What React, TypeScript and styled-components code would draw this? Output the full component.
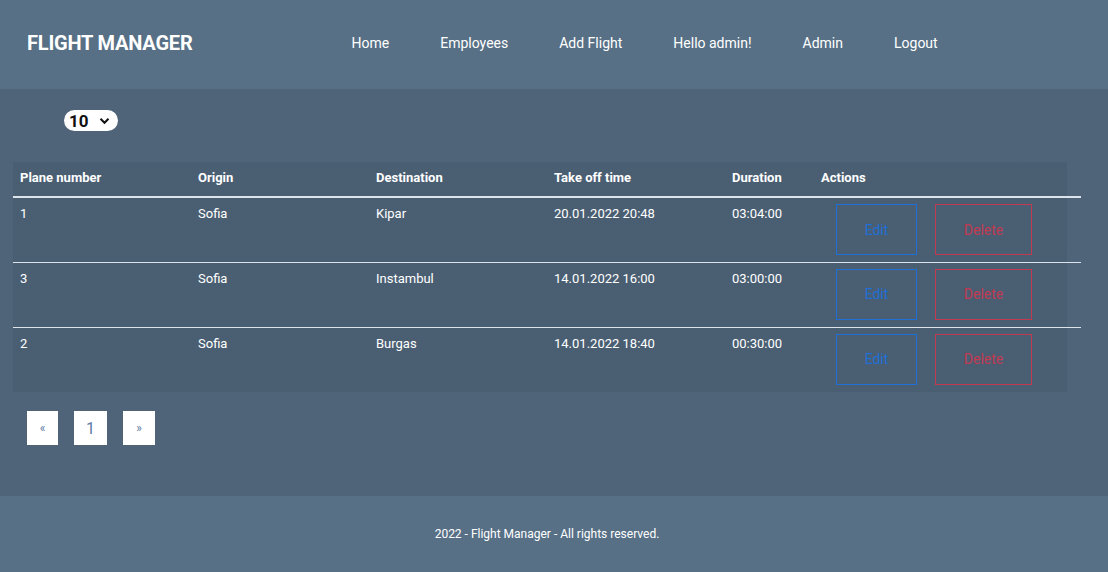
import styled, { createGlobalStyle } from 'styled-components';

const GlobalStyle = createGlobalStyle`
  html, body {
    margin: 0;
    padding: 0;
    background: #4f6478;
    font-family: Roboto, "Liberation Sans", Arial, sans-serif;
    color: #fff;
  }
  * { box-sizing: border-box; }
`;

const Page = styled.div`
  display: flex;
  flex-direction: column;
  width: 1108px;
  height: 572px;
  overflow: hidden;
`;

const Header = styled.header`
  height: 89px;
  flex-shrink: 0;
  background: #577086;
  display: flex;
  align-items: center;
  padding-left: 27px;
`;

const Logo = styled.div`
  font-size: 20px;
  font-weight: 700;
  letter-spacing: -0.2px;
  margin-top: -4px;
`;

const Nav = styled.nav`
  display: flex;
  margin-left: 133.5px;
  margin-top: -4px;
`;

const NavLink = styled.a`
  font-size: 14px;
  color: #fff;
  padding: 0 25.5px;
  text-decoration: none;
`;

const Main = styled.main`
  flex: 1;
  display: flex;
  flex-direction: column;
  padding: 21px 0 0 13px;
`;

const SelectPill = styled.div`
  margin-left: 51px;
  width: 54px;
  height: 21px;
  border-radius: 11px;
  background: #fff;
  color: #111;
  display: flex;
  align-items: center;
  padding-left: 5px;
  gap: 10px;
  font-size: 17px;
  font-weight: 700;
`;

const Table = styled.table`
  margin-top: 31px;
  width: 1068px;
  border-collapse: collapse;
  background: linear-gradient(to right, rgba(30, 45, 65, 0.1) 1054px, transparent 0);
  font-size: 13px;
`;

const HeadCell = styled.th<{ $w?: number }>`
  text-align: left;
  font-weight: 700;
  padding: 7px 7px 11px;
  height: 35px;
  width: ${(p) => (p.$w ? `${p.$w}px` : 'auto')};
  border-bottom: 2px solid #dde3ea;
`;

const Row = styled.tr<{ $last?: boolean }>`
  border-bottom: ${(p) => (p.$last ? 'none' : '1px solid #dde3ea')};
`;

const Cell = styled.td`
  vertical-align: top;
  padding: 8px 7px 0;
  height: 65px;
`;

const Actions = styled.div`
  display: flex;
  gap: 18px;
  padding-left: 15px;
  margin-top: -2px;
`;

const ActionButton = styled.button<{ $tone: 'blue' | 'red'; $w: number }>`
  width: ${(p) => p.$w}px;
  height: 51px;
  background: transparent;
  border: 1px solid ${(p) => (p.$tone === 'blue' ? '#1f6fd6' : '#c23a52')};
  color: ${(p) => (p.$tone === 'blue' ? '#1f6fd6' : '#c23a52')};
  font-family: inherit;
  font-size: 14px;
  padding: 0;
`;

const Pager = styled.div`
  display: flex;
  gap: 16px;
  margin: 19px 0 0 14px;
`;

const PageBox = styled.div<{ $w: number }>`
  width: ${(p) => p.$w}px;
  height: 34px;
  background: #fff;
  color: #5d7aa6;
  display: flex;
  align-items: center;
  justify-content: center;
  font-size: ${(p) => (p.$w > 32 ? '16px' : '12px')};
`;

const Footer = styled.footer`
  height: 76px;
  flex-shrink: 0;
  background: #577086;
  display: flex;
  align-items: center;
  justify-content: center;
  font-size: 12px;
  padding-right: 14px;
`;

const flights = [
  { no: '1', from: 'Sofia', to: 'Kipar', time: '20.01.2022 20:48', dur: '03:04:00' },
  { no: '3', from: 'Sofia', to: 'Instambul', time: '14.01.2022 16:00', dur: '03:00:00' },
  { no: '2', from: 'Sofia', to: 'Burgas', time: '14.01.2022 18:40', dur: '00:30:00' },
];

const Chevron = () => (
  <svg width="11" height="8" viewBox="0 0 11 8">
    <path d="M1.5 1.8 L5.5 5.8 L9.5 1.8" fill="none" stroke="#111" strokeWidth="2" />
  </svg>
);

export default function App() {
  return (
    <Page>
      <GlobalStyle />
      <Header>
        <Logo>FLIGHT MANAGER</Logo>
        <Nav>
          {['Home', 'Employees', 'Add Flight', 'Hello admin!', 'Admin', 'Logout'].map((l) => (
            <NavLink key={l}>{l}</NavLink>
          ))}
        </Nav>
      </Header>
      <Main>
        <SelectPill>
          10 <Chevron />
        </SelectPill>
        <Table>
          <thead>
            <tr>
              <HeadCell $w={178}>Plane number</HeadCell>
              <HeadCell $w={178}>Origin</HeadCell>
              <HeadCell $w={178}>Destination</HeadCell>
              <HeadCell $w={178}>Take off time</HeadCell>
              <HeadCell $w={89}>Duration</HeadCell>
              <HeadCell>Actions</HeadCell>
            </tr>
          </thead>
          <tbody>
            {flights.map((f, i) => (
              <Row key={f.no} $last={i === flights.length - 1}>
                <Cell>{f.no}</Cell>
                <Cell>{f.from}</Cell>
                <Cell>{f.to}</Cell>
                <Cell>{f.time}</Cell>
                <Cell>{f.dur}</Cell>
                <Cell>
                  <Actions>
                    <ActionButton $tone="blue" $w={81}>Edit</ActionButton>
                    <ActionButton $tone="red" $w={97}>Delete</ActionButton>
                  </Actions>
                </Cell>
              </Row>
            ))}
          </tbody>
        </Table>
        <Pager>
          <PageBox $w={31}>«</PageBox>
          <PageBox $w={33}>1</PageBox>
          <PageBox $w={32}>»</PageBox>
        </Pager>
      </Main>
      <Footer>2022 - Flight Manager - All rights reserved.</Footer>
    </Page>
  );
}
